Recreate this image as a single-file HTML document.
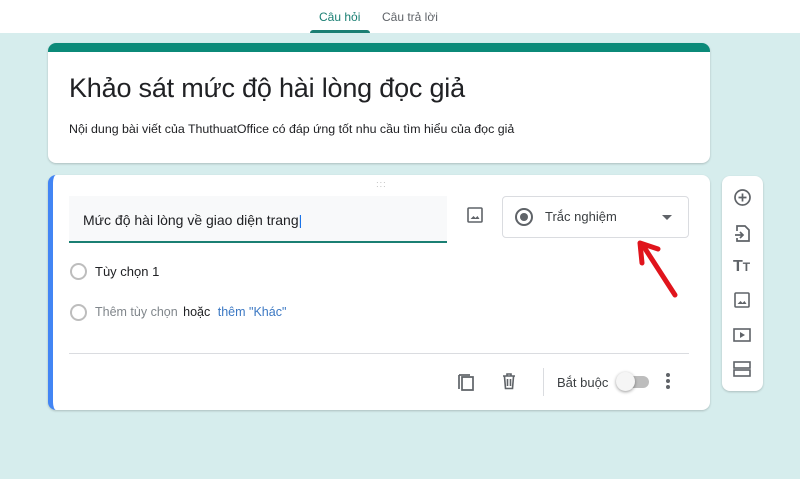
<!DOCTYPE html>
<html><head><meta charset="utf-8"><style>
*{margin:0;padding:0;box-sizing:border-box}
body{width:800px;height:479px;overflow:hidden;background:#d6eded;font-family:"Liberation Sans",sans-serif;position:relative;color:#202124}
.abs{position:absolute}
.top{left:0;top:0;width:800px;height:33px;background:#fff}
.card{background:#fff;border-radius:8px;box-shadow:0 1px 2px rgba(0,0,0,.2)}
</style></head><body>
<div class="abs top"></div>
<div class="abs" style="left:319px;top:10px;font-size:12px;color:#1a7f73">Câu hỏi</div>
<div class="abs" style="left:382px;top:10px;font-size:12px;color:#5f6368">Câu trả lời</div>
<div class="abs" style="left:310px;top:30px;width:60px;height:3px;background:#1a7f73;border-radius:3px 3px 0 0"></div>

<div class="abs card" style="left:48px;top:43px;width:662px;height:120px;overflow:hidden">
<div style="height:9px;background:#0b8a79"></div>
<div class="abs" style="left:21px;top:30px;font-size:27px;color:#202124;letter-spacing:-0.2px">Khảo sát mức độ hài lòng đọc giả</div>
<div class="abs" style="left:21px;top:79px;font-size:12.4px;color:#202124">Nội dung bài viết của ThuthuatOffice có đáp ứng tốt nhu cầu tìm hiểu của đọc giả</div>
</div>

<div class="abs card" style="left:48px;top:175px;width:662px;height:235px;overflow:hidden;border-left:5px solid #4285f4">
<div class="abs" style="left:323px;top:5px;font-size:9px;color:#bbb;letter-spacing:1px;line-height:4px">∙∙∙<br>∙∙∙</div>
<div class="abs" style="left:16px;top:21px;width:378px;height:47px;background:#f8f9fa;border-bottom:2px solid #1a7f73"></div>
<div class="abs" style="left:30px;top:37px;font-size:14px">Mức độ hài lòng về giao diện trang<span style="color:#1a73e8">|</span></div>
<svg class="abs" style="left:413px;top:31px" width="18" height="18" viewBox="0 0 18 18"><rect x="2" y="2" width="14" height="14" rx="1" fill="none" stroke="#5f6368" stroke-width="1.6"/><path d="M4.5 13l3-3 2 2 2-2 2 3z" fill="#5f6368"/></svg>
<div class="abs" style="left:449px;top:21px;width:187px;height:42px;border:1px solid #dadce0;border-radius:4px"></div>
<div class="abs" style="left:462px;top:33px;width:18px;height:18px;border:2px solid #5f6368;border-radius:50%"></div>
<div class="abs" style="left:467px;top:38px;width:8px;height:8px;background:#5f6368;border-radius:50%"></div>
<div class="abs" style="left:492px;top:34px;font-size:13px;color:#3c4043">Trắc nghiệm</div>
<div class="abs" style="left:609px;top:40px;border:5px solid transparent;border-top-color:#5f6368;border-bottom:0"></div>
<div class="abs" style="left:17px;top:88px;width:17px;height:17px;border:2px solid #bdbdbd;border-radius:50%"></div>
<div class="abs" style="left:42px;top:89px;font-size:13px;color:#202124">Tùy chọn 1</div>
<div class="abs" style="left:17px;top:129px;width:17px;height:17px;border:2px solid #bdbdbd;border-radius:50%"></div>
<div class="abs" style="left:42px;top:130px;font-size:12.5px;color:#80868b">Thêm tùy chọn <span style="color:#202124;margin-left:2px">hoặc</span> <span style="color:#3b78c3;margin-left:4px">thêm "Khác"</span></div>
<div class="abs" style="left:16px;top:178px;width:620px;height:1px;background:#dadce0"></div>
<svg class="abs" style="left:403px;top:197px" width="20" height="20" viewBox="0 0 20 20"><path d="M6 5h11v13H6z M3 3v14" fill="none" stroke="#5f6368" stroke-width="1.7"/><path d="M3 3h11" stroke="#5f6368" stroke-width="1.7"/></svg>
<svg class="abs" style="left:447px;top:197px" width="18" height="18" viewBox="0 0 18 18"><path d="M3 4h12M7 4V2h4v2M4.5 4.5l1 12h7l1-12M7.5 7v7M10.5 7v7" fill="none" stroke="#5f6368" stroke-width="1.6"/></svg>
<div class="abs" style="left:490px;top:193px;width:1px;height:28px;background:#dadce0"></div>
<div class="abs" style="left:504px;top:200px;font-size:13px;color:#3c4043">Bắt buộc</div>
<div class="abs" style="left:568px;top:201px;width:28px;height:12px;background:#bdbdbd;border-radius:6px"></div>
<div class="abs" style="left:563px;top:197px;width:19px;height:19px;background:#f5f5f5;border-radius:50%;box-shadow:0 1px 3px rgba(0,0,0,.4)"></div>
<div class="abs" style="left:613px;top:198px;width:4px;height:4px;background:#5f6368;border-radius:50%;box-shadow:0 6px 0 #5f6368,0 12px 0 #5f6368"></div>
</div>

<div class="abs card" style="left:722px;top:176px;width:41px;height:215px">
<svg class="abs" style="left:11px;top:12px" width="19" height="19" viewBox="0 0 19 19"><circle cx="9.5" cy="9.5" r="7.5" fill="none" stroke="#5f6368" stroke-width="1.7"/><path d="M9.5 5.5v8M5.5 9.5h8" stroke="#5f6368" stroke-width="1.7"/></svg>
<svg class="abs" style="left:12px;top:48px" width="18" height="19" viewBox="0 0 18 19"><path d="M3 7V2h8l4 4v11H3v-3" fill="none" stroke="#5f6368" stroke-width="1.7"/><path d="M1 11h8M6 8l3 3-3 3" fill="none" stroke="#5f6368" stroke-width="1.7"/></svg>
<div class="abs" style="left:11px;top:82px;font-size:16px;font-weight:bold;color:#5f6368">T<span style="font-size:12px">T</span></div>
<svg class="abs" style="left:11px;top:115px" width="18" height="18" viewBox="0 0 18 18"><rect x="2" y="2" width="14" height="14" rx="1" fill="none" stroke="#5f6368" stroke-width="1.6"/><path d="M4.5 13l3-3 2 2 2-2 2 3z" fill="#5f6368"/></svg>
<svg class="abs" style="left:10px;top:150px" width="20" height="18" viewBox="0 0 20 18"><rect x="2" y="3" width="16" height="12" fill="none" stroke="#5f6368" stroke-width="1.6"/><path d="M8 6v6l5-3z" fill="#5f6368"/></svg>
<svg class="abs" style="left:10px;top:184px" width="20" height="18" viewBox="0 0 20 18"><rect x="2" y="2" width="16" height="6" fill="none" stroke="#5f6368" stroke-width="1.6"/><rect x="2" y="10" width="16" height="6" fill="none" stroke="#5f6368" stroke-width="1.6"/></svg>
</div>

<svg class="abs" style="left:630px;top:235px" width="60" height="70" viewBox="0 0 60 70"><path d="M45 60L14 12" stroke="#e0141c" stroke-width="5" stroke-linecap="round"/><path d="M10 8l2 20M10 8l18 6" stroke="#e0141c" stroke-width="5" stroke-linecap="round"/></svg>
</body></html>
